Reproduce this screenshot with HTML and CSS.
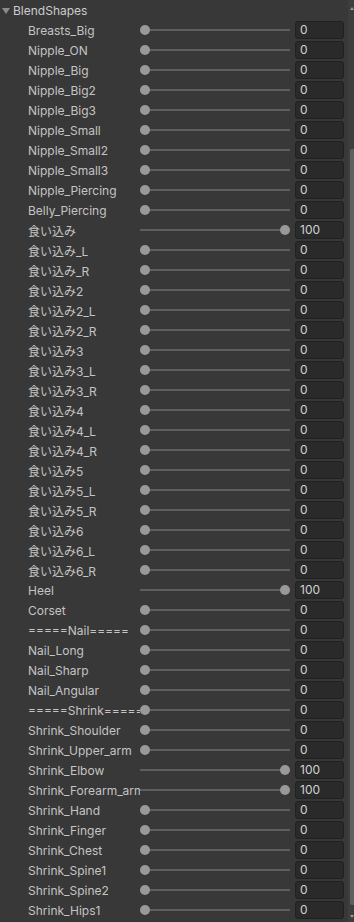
FILE: index.html
```html
<!DOCTYPE html>
<html lang="en">
<head>
<meta charset="UTF-8">
<title>BlendShapes</title>
<link rel="stylesheet" href="styles.css">
</head>
<body>

<div class="inspector">
    <div class="list">
        <div class="header"><span class="arrow"></span>BlendShapes</div>

        <div class="row"><span class="label">Breasts_Big</span><div class="slider"><span class="knob"></span></div><span class="field">0</span></div>
        <div class="row"><span class="label">Nipple_ON</span><div class="slider"><span class="knob"></span></div><span class="field">0</span></div>
        <div class="row"><span class="label">Nipple_Big</span><div class="slider"><span class="knob"></span></div><span class="field">0</span></div>
        <div class="row"><span class="label">Nipple_Big2</span><div class="slider"><span class="knob"></span></div><span class="field">0</span></div>
        <div class="row"><span class="label">Nipple_Big3</span><div class="slider"><span class="knob"></span></div><span class="field">0</span></div>
        <div class="row"><span class="label">Nipple_Small</span><div class="slider"><span class="knob"></span></div><span class="field">0</span></div>
        <div class="row"><span class="label">Nipple_Small2</span><div class="slider"><span class="knob"></span></div><span class="field">0</span></div>
        <div class="row"><span class="label">Nipple_Small3</span><div class="slider"><span class="knob"></span></div><span class="field">0</span></div>
        <div class="row"><span class="label">Nipple_Piercing</span><div class="slider"><span class="knob"></span></div><span class="field">0</span></div>
        <div class="row"><span class="label">Belly_Piercing</span><div class="slider"><span class="knob"></span></div><span class="field">0</span></div>
        <div class="row"><span class="label">食い込み</span><div class="slider max"><span class="knob"></span></div><span class="field">100</span></div>
        <div class="row"><span class="label">食い込み_L</span><div class="slider"><span class="knob"></span></div><span class="field">0</span></div>
        <div class="row"><span class="label">食い込み_R</span><div class="slider"><span class="knob"></span></div><span class="field">0</span></div>
        <div class="row"><span class="label">食い込み2</span><div class="slider"><span class="knob"></span></div><span class="field">0</span></div>
        <div class="row"><span class="label">食い込み2_L</span><div class="slider"><span class="knob"></span></div><span class="field">0</span></div>
        <div class="row"><span class="label">食い込み2_R</span><div class="slider"><span class="knob"></span></div><span class="field">0</span></div>
        <div class="row"><span class="label">食い込み3</span><div class="slider"><span class="knob"></span></div><span class="field">0</span></div>
        <div class="row"><span class="label">食い込み3_L</span><div class="slider"><span class="knob"></span></div><span class="field">0</span></div>
        <div class="row"><span class="label">食い込み3_R</span><div class="slider"><span class="knob"></span></div><span class="field">0</span></div>
        <div class="row"><span class="label">食い込み4</span><div class="slider"><span class="knob"></span></div><span class="field">0</span></div>
        <div class="row"><span class="label">食い込み4_L</span><div class="slider"><span class="knob"></span></div><span class="field">0</span></div>
        <div class="row"><span class="label">食い込み4_R</span><div class="slider"><span class="knob"></span></div><span class="field">0</span></div>
        <div class="row"><span class="label">食い込み5</span><div class="slider"><span class="knob"></span></div><span class="field">0</span></div>
        <div class="row"><span class="label">食い込み5_L</span><div class="slider"><span class="knob"></span></div><span class="field">0</span></div>
        <div class="row"><span class="label">食い込み5_R</span><div class="slider"><span class="knob"></span></div><span class="field">0</span></div>
        <div class="row"><span class="label">食い込み6</span><div class="slider"><span class="knob"></span></div><span class="field">0</span></div>
        <div class="row"><span class="label">食い込み6_L</span><div class="slider"><span class="knob"></span></div><span class="field">0</span></div>
        <div class="row"><span class="label">食い込み6_R</span><div class="slider"><span class="knob"></span></div><span class="field">0</span></div>
        <div class="row"><span class="label">Heel</span><div class="slider max"><span class="knob"></span></div><span class="field">100</span></div>
        <div class="row"><span class="label">Corset</span><div class="slider"><span class="knob"></span></div><span class="field">0</span></div>
        <div class="row"><span class="label">=====Nail=====</span><div class="slider"><span class="knob"></span></div><span class="field">0</span></div>
        <div class="row"><span class="label">Nail_Long</span><div class="slider"><span class="knob"></span></div><span class="field">0</span></div>
        <div class="row"><span class="label">Nail_Sharp</span><div class="slider"><span class="knob"></span></div><span class="field">0</span></div>
        <div class="row"><span class="label">Nail_Angular</span><div class="slider"><span class="knob"></span></div><span class="field">0</span></div>
        <div class="row"><span class="label">=====Shrink=====</span><div class="slider"><span class="knob"></span></div><span class="field">0</span></div>
        <div class="row"><span class="label">Shrink_Shoulder</span><div class="slider"><span class="knob"></span></div><span class="field">0</span></div>
        <div class="row"><span class="label">Shrink_Upper_arm</span><div class="slider"><span class="knob"></span></div><span class="field">0</span></div>
        <div class="row"><span class="label">Shrink_Elbow</span><div class="slider max"><span class="knob"></span></div><span class="field">100</span></div>
        <div class="row"><span class="label">Shrink_Forearm_arm</span><div class="slider max"><span class="knob"></span></div><span class="field">100</span></div>
        <div class="row"><span class="label">Shrink_Hand</span><div class="slider"><span class="knob"></span></div><span class="field">0</span></div>
        <div class="row"><span class="label">Shrink_Finger</span><div class="slider"><span class="knob"></span></div><span class="field">0</span></div>
        <div class="row"><span class="label">Shrink_Chest</span><div class="slider"><span class="knob"></span></div><span class="field">0</span></div>
        <div class="row"><span class="label">Shrink_Spine1</span><div class="slider"><span class="knob"></span></div><span class="field">0</span></div>
        <div class="row"><span class="label">Shrink_Spine2</span><div class="slider"><span class="knob"></span></div><span class="field">0</span></div>
        <div class="row"><span class="label">Shrink_Hips1</span><div class="slider"><span class="knob"></span></div><span class="field">0</span></div>
    </div>

    <div class="scrollbar">
        <span class="scroll-arrow up"></span>
        <div class="scroll-thumb"></div>
        <span class="scroll-arrow down"></span>
    </div>
</div>

</body>
</html>
```

FILE: styles.css
```css
body {
    margin: 0;
    background: #383838;
    font-family: Inter, "Noto Sans CJK JP", sans-serif;
    font-size: 12px;
    color: #c4c4c4;
    overflow: hidden;
}
.inspector {
    display: flex;
    height: 922px;
}
.list { flex: 1; }

.header {
    height: 20px;
    display: flex;
    align-items: center;
    padding-left: 2px;
    color: #cccccc;
}
.arrow {
    width: 0;
    height: 0;
    border-left: 4px solid transparent;
    border-right: 4px solid transparent;
    border-top: 6px solid #8c8c8c;
    margin-right: 3px;
    margin-top: 1px;
}

.row {
    height: 20px;
    display: flex;
    align-items: center;
    padding-left: 28px;
}
.label {
    width: 112px;
    flex-shrink: 0;
    white-space: nowrap;
    overflow: hidden;
}
.slider {
    position: relative;
    width: 150px;
    height: 10px;
    flex-shrink: 0;
}
.slider::before {
    content: "";
    position: absolute;
    left: 0;
    right: 0;
    top: 4px;
    height: 2px;
    background: #5e5e5e;
}
.knob {
    position: absolute;
    left: 0;
    top: 0;
    width: 10px;
    height: 10px;
    border-radius: 50%;
    background: #999;
}
.slider.max .knob { left: 140px; }

.field {
    margin-left: 5px;
    width: 49px;
    height: 18px;
    box-sizing: border-box;
    border: 1px solid #212121;
    border-radius: 3px;
    background: #2a2a2a;
    padding-left: 4px;
    line-height: 16px;
    color: #d2d2d2;
}

.scrollbar {
    width: 6px;
    display: flex;
    flex-direction: column;
    align-items: flex-end;
    background: #3e3e3e;
}
.scroll-thumb {
    width: 4px;
    height: 756px;
    margin-top: 139px;
    background: #5f5f5f;
    border-radius: 2px 0 0 2px;
}
.scroll-arrow {
    width: 0;
    height: 0;
    border-left: 2px solid transparent;
    border-right: 2px solid transparent;
}
.scroll-arrow.up {
    margin-top: 7px;
    border-bottom: 3px solid #9a9a9a;
}
.scroll-arrow.down {
    margin-top: 10px;
    border-top: 3px solid #9a9a9a;
}
```
